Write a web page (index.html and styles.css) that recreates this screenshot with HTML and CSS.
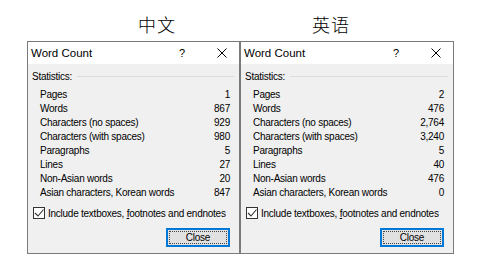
FILE: index.html
```html
<!DOCTYPE html>
<html lang="zh">
<head>
    <meta charset="UTF-8">
    <title>Word Count</title>
    <link rel="stylesheet" href="styles.css">
</head>
<body>
    <div class="heads">
        <span class="head head-zh">中文</span>
        <span class="head head-en">英语</span>
    </div>

    <div class="dialogs">
        <div class="dialog">
            <div class="titlebar">
                <span class="title">Word Count</span>
                <span class="help">?</span>
                <span class="close-x"><svg width="10" height="10" viewBox="0 0 10 10"><path d="M0.5 0.5 L9.5 9.5 M9.5 0.5 L0.5 9.5" stroke="#000" stroke-width="1"/></svg></span>
            </div>
            <div class="body">
                <div class="group"><span>Statistics:</span><i class="rule"></i></div>
                <div class="row"><span>Pages</span><span>1</span></div>
                <div class="row"><span>Words</span><span>867</span></div>
                <div class="row"><span>Characters (no spaces)</span><span>929</span></div>
                <div class="row"><span>Characters (with spaces)</span><span>980</span></div>
                <div class="row"><span>Paragraphs</span><span>5</span></div>
                <div class="row"><span>Lines</span><span>27</span></div>
                <div class="row"><span>Non-Asian words</span><span>20</span></div>
                <div class="row"><span>Asian characters, Korean words</span><span>847</span></div>
                <div class="check">
                    <span class="box"><svg width="10" height="10" viewBox="0 0 10 10"><path d="M1 5 L4 8 L9.5 1.5" stroke="#333" stroke-width="1.1" fill="none"/></svg></span>
                    <span>Include textboxes, <u>f</u>ootnotes and endnotes</span>
                </div>
                <div class="actions"><button class="btn"><span>Close</span></button></div>
            </div>
        </div>

        <div class="dialog dialog-en">
            <div class="titlebar">
                <span class="title">Word Count</span>
                <span class="help">?</span>
                <span class="close-x"><svg width="10" height="10" viewBox="0 0 10 10"><path d="M0.5 0.5 L9.5 9.5 M9.5 0.5 L0.5 9.5" stroke="#000" stroke-width="1"/></svg></span>
            </div>
            <div class="body">
                <div class="group"><span>Statistics:</span><i class="rule"></i></div>
                <div class="row"><span>Pages</span><span>2</span></div>
                <div class="row"><span>Words</span><span>476</span></div>
                <div class="row"><span>Characters (no spaces)</span><span>2,764</span></div>
                <div class="row"><span>Characters (with spaces)</span><span>3,240</span></div>
                <div class="row"><span>Paragraphs</span><span>5</span></div>
                <div class="row"><span>Lines</span><span>40</span></div>
                <div class="row"><span>Non-Asian words</span><span>476</span></div>
                <div class="row"><span>Asian characters, Korean words</span><span>0</span></div>
                <div class="check">
                    <span class="box"><svg width="10" height="10" viewBox="0 0 10 10"><path d="M1 5 L4 8 L9.5 1.5" stroke="#333" stroke-width="1.1" fill="none"/></svg></span>
                    <span>Include textboxes, <u>f</u>ootnotes and endnotes</span>
                </div>
                <div class="actions"><button class="btn"><span>Close</span></button></div>
            </div>
        </div>
    </div>
</body>
</html>
```

FILE: styles.css
```css
body {
    margin: 0;
    background: #fff;
    font-family: 'Liberation Sans', Arial, sans-serif;
    font-size: 10px;
    letter-spacing: -0.25px;
    color: #000;
}
.heads {
    display: flex;
    height: 41px;
    align-items: flex-start;
}
.head {
    font-family: 'Noto Sans CJK SC', sans-serif;
    font-size: 18px;
    line-height: 20px;
    margin-top: 14px;
    font-weight: 300;
    letter-spacing: 1px;
}
.head-zh {
    margin-left: 138px;
}
.head-en {
    margin-left: 136px;
}
.dialogs {
    display: flex;
    padding-left: 27px;
}
.dialog {
    width: 211px;
    height: 211px;
    border: 1px solid #7a7a7a;
    background: #f0f0f0;
    display: flex;
    flex-direction: column;
}
.dialog-en {
    width: 212px;
}
.titlebar {
    height: 22px;
    background: #fff;
    display: flex;
    align-items: center;
    padding-left: 3px;
}
.title {
    font-size: 11.5px;
    letter-spacing: 0;
    flex: 1;
}
.help {
    font-size: 11px;
    width: 38px;
}
.close-x {
    width: 22px;
    display: flex;
    align-items: center;
}
.body {
    flex: 1;
    padding: 0 9px 0 4px;
    display: flex;
    flex-direction: column;
}
.group {
    display: flex;
    align-items: center;
    height: 24px;
}
.rule {
    flex: 1;
    height: 1px;
    background: #dcdcdc;
    margin-left: 5px;
    margin-right: -4px;
}
.row {
    display: flex;
    justify-content: space-between;
    height: 14px;
    line-height: 14px;
    padding-left: 8px;
}
.check {
    display: flex;
    align-items: center;
    gap: 3px;
    height: 14px;
    margin-top: 6px;
    padding-left: 1px;
    white-space: nowrap;
}
.box {
    width: 10px;
    height: 10px;
    border: 1px solid #333;
    background: #fff;
    display: flex;
    flex: none;
}
.check u {
    text-decoration-thickness: 1px;
}
.actions {
    display: flex;
    justify-content: flex-end;
    margin-top: 8px;
}
.btn {
    width: 64px;
    height: 19px;
    padding: 2px;
    border: 1px solid #0078d7;
    box-shadow: inset 0 0 0 1px #0078d7;
    background: #e1e1e1;
    font-family: inherit;
    font-size: 10px;
    letter-spacing: -0.25px;
    display: flex;
}
.btn span {
    flex: 1;
    border: 1px dotted #444;
    line-height: 11px;
    text-align: center;
}
```
